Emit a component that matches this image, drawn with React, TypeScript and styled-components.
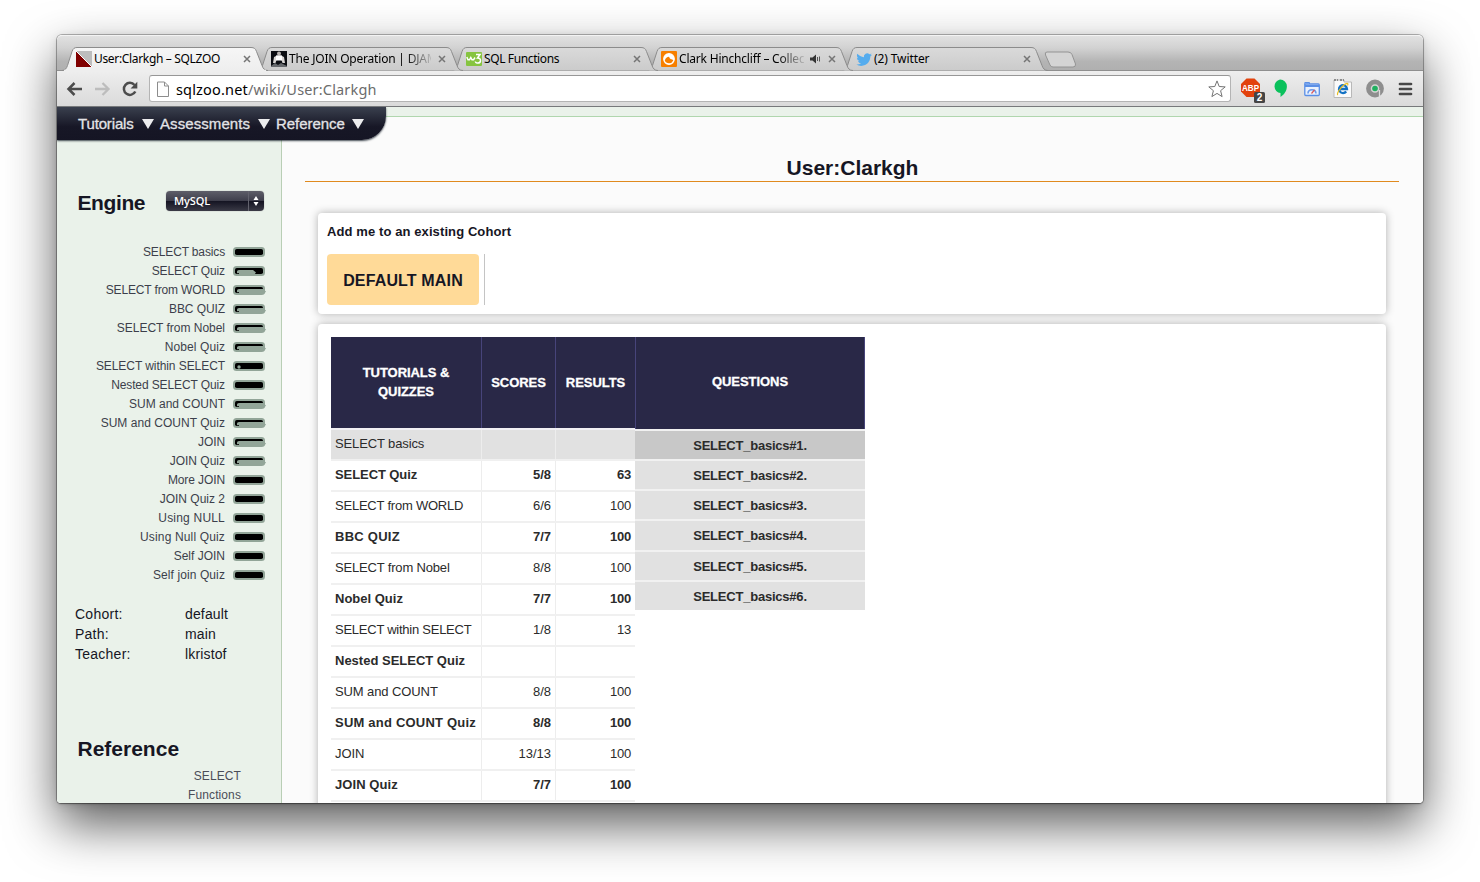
import React from "react";
import styled, { createGlobalStyle, css } from "styled-components";

const Global = createGlobalStyle`
  * { box-sizing: border-box; }
  html, body { margin: 0; padding: 0; background: #fff; }
  body { width: 1480px; height: 882px; overflow: hidden; font-family: "Liberation Sans", Helvetica, Arial, sans-serif; }
`;

const Desktop = styled.div`
  width: 1480px;
  height: 882px;
  padding: 35px 57px 79px;
  overflow: hidden;
`;

const Window = styled.div`
  width: 1366px;
  height: 768px;
  display: flex;
  flex-direction: column;
  border-radius: 5px 5px 4px 4px;
  box-shadow: 0 0 0 1px rgba(0, 0, 0, 0.26), 0 22px 50px rgba(0, 0, 0, 0.64), 0 2px 10px rgba(0, 0, 0, 0.12),
    0 1px 2px rgba(0, 0, 0, 0.3);
`;

const TabStrip = styled.div`
  flex: none;
  height: 36px;
  display: flex;
  align-items: flex-end;
  padding-left: 5px;
  border-radius: 5px 5px 0 0;
  border-top: 1px solid #f3f3f3;
  background: linear-gradient(#e1e1e1, #d2d2d2 35%, #b4b4b4 75%, #b0b0b0);
  border-bottom: 1px solid #8f8f8f;
`;

const TabBox = styled.div<{ $z: number }>`
  position: relative;
  z-index: ${(p) => p.$z};
  width: 195px;
  height: 23px;
  display: flex;
  align-items: center;
  padding: 1px 3px 0 14px;
`;

const TabShape = styled.svg`
  position: absolute;
  left: 0;
  top: 0;
  overflow: visible;
`;

const Favicon = styled.svg`
  position: relative;
  flex: none;
  width: 16px;
  height: 16px;
  margin-right: 2px;
`;

const TabTitle = styled.span<{ $ls: number; $fade?: boolean }>`
  position: relative;
  flex: 1;
  min-width: 0;
  white-space: nowrap;
  font: 12px/18px "Noto Sans", "Open Sans", sans-serif;
  letter-spacing: ${(p) => p.$ls}px;
  color: #000;
  ${(p) =>
    p.$fade &&
    css`
      mask-image: linear-gradient(90deg, #000 calc(100% - 26px), rgba(0, 0, 0, 0.12));
    `}
`;

const TabSide = styled.svg`
  position: relative;
  flex: none;
  margin-left: 2px;
`;

const Sound = styled(TabSide)`
  margin-left: 6px;
`;

const NewTab = styled.svg`
  margin: 0 0 2px 7px;
`;

const Toolbar = styled.div`
  flex: none;
  height: 36px;
  display: flex;
  align-items: center;
  padding: 0 11px 0 9px;
  background: linear-gradient(#eeeeee, #dadada);
  border-bottom: 1px solid #77797b;
`;

const NavIcon = styled.svg`
  flex: none;
  margin-right: 11px;
`;

const Address = styled.div`
  flex: 1;
  height: 27px;
  display: flex;
  align-items: center;
  padding: 0 4px 0 7px;
  background: #fff;
  border: 1px solid #b4b4b4;
  border-top-color: #979797;
  border-radius: 3px;
`;

const Url = styled.span`
  flex: 1;
  margin-left: 7px;
  font: 14.5px/20px "Noto Sans", "Open Sans", sans-serif;
  letter-spacing: 0.17px;
  color: #6c6c6c;
  b { font-weight: 400; color: #000; }
`;

const Extensions = styled.div`
  display: flex;
  align-items: center;
  gap: 9px;
  margin-left: 9px;
  svg { overflow: visible; }
`;

const Viewport = styled.div`
  position: relative;
  flex: 1;
  min-height: 0;
  overflow: hidden;
  display: flex;
  flex-direction: column;
  background: #fbfbfb;
  border-radius: 0 0 4px 4px;
`;

const TopBand = styled.div`
  flex: none;
  height: 10px;
  background: #eaf2ea;
  border-bottom: 1px solid #b0d6ae;
`;

const MenuBar = styled.nav`
  position: absolute;
  z-index: 2;
  left: 0;
  top: 0;
  width: 329px;
  height: 33px;
  display: flex;
  align-items: center;
  gap: 6.500px;
  padding: 0 0 0 21px;
  border-radius: 0 0 24px 0;
  background: linear-gradient(#3a404e, #171726 60%, #151524);
  box-shadow: 0 1px 2px rgba(20, 30, 40, 0.8);
`;

const MenuItem = styled.span<{ $w: number; $ls: number }>`
  width: ${(p) => p.$w}px;
  display: flex;
  justify-content: space-between;
  align-items: center;
  font-size: 15px;
  letter-spacing: ${(p) => p.$ls}px;
  color: #e3e3e6;
  -webkit-text-stroke: 0.3px #e3e3e6;
`;

const Columns = styled.div`
  flex: 1;
  min-height: 0;
  display: flex;
`;

const Sidebar = styled.aside`
  flex: none;
  width: 225px;
  height: 688px;
  margin-top: -1px;
  padding-top: 75px;
  overflow: hidden;
  background: #eaf2ea;
  border-right: 1px solid #b9ceb5;
`;

const SideHead = styled.div`
  height: 24px;
  display: flex;
  align-items: center;
  justify-content: space-between;
  padding: 0 17px 0 20.5px;
`;

const SideTitle = styled.h2<{ $ls?: number }>`
  margin: 0;
  font-size: 21px;
  line-height: 24px;
  letter-spacing: ${(p) => p.$ls ?? 0}px;
  color: #161624;
`;

const Select = styled.div`
  width: 98px;
  height: 20px;
  display: flex;
  align-items: center;
  justify-content: space-between;
  margin-top: -4px;
  padding-left: 8px;
  border-radius: 4px;
  background: linear-gradient(#5e5e69, #3f3f4c 48%, #151523 52%, #3a3a46);
  box-shadow: 0 0 1px #777;
  font: 600 11px/20px "Open Sans", "Noto Sans", sans-serif;
  letter-spacing: -0.1px;
  color: #fff;
`;

const Stepper = styled.span`
  width: 16px;
  height: 20px;
  display: flex;
  align-items: center;
  justify-content: center;
  padding-right: 2px;
  border-left: 1px solid #62626d;
`;

const Lessons = styled.ul`
  list-style: none;
  margin: 27px 0 0;
  padding: 0 15px 0 0;
`;

const Lesson = styled.li`
  height: 19px;
  display: flex;
  align-items: center;
  justify-content: flex-end;
  gap: 8px;
`;

const LessonName = styled.span<{ $ls: number }>`
  font-size: 12px;
  letter-spacing: ${(p) => p.$ls}px;
  color: #3c3f4b;
`;

const Facts = styled.dl`
  display: grid;
  grid-template-columns: 110px 1fr;
  margin: 20px 0 0 18px;
  font-size: 14px;
  line-height: 20px;
  letter-spacing: 0.15px;
  color: #161624;
  dt, dd { margin: 0; }
  dt { letter-spacing: 0.25px; }
`;

const RefHead = styled.div`
  margin-top: 73px;
  padding-left: 20.5px;
`;

const RefLinks = styled.div`
  margin-top: 6px;
  padding-right: 40px;
  text-align: right;
  font-size: 12px;
  line-height: 19px;
  letter-spacing: 0.1px;
  color: #4a4d58;
`;

const Main = styled.main`
  flex: 1;
  padding: 37px 24px 0 23px;
`;

const PageTitle = styled.h1`
  height: 28px;
  margin: 0 0 31px;
  padding-left: 1px;
  font-size: 21px;
  line-height: 28px;
  text-align: center;
  color: #161624;
  border-bottom: 1px solid #e08a1e;
`;

const Card = styled.section<{ $h: number; $pad: string }>`
  height: ${(p) => p.$h}px;
  margin: 0 13px 10px;
  padding: ${(p) => p.$pad};
  background: #fff;
  border-radius: 4px;
  box-shadow: 0 0 8px rgba(0, 0, 0, 0.3);
`;

const CardTitle = styled.p`
  margin: 0;
  font-size: 13px;
  line-height: 18px;
  font-weight: 700;
  letter-spacing: 0.1px;
  color: #161624;
`;

const CohortRow = styled.div`
  display: inline-flex;
  height: 51px;
  margin-top: 13px;
  padding-right: 5px;
  border-right: 1px solid #c4c4c4;
`;

const CohortButton = styled.button`
  width: 152px;
  height: 51px;
  padding: 3px 0 0;
  border: 0;
  border-radius: 4px;
  background: #ffda98;
  color: #161624;
  font: 700 16px "Liberation Sans", Helvetica, Arial, sans-serif;
  letter-spacing: 0.15px;
  white-space: nowrap;
`;

const Tables = styled.div`
  display: flex;
  align-items: flex-start;
`;

const Scores = styled.div`
  width: 304px;
`;

const cols = css`
  display: grid;
  grid-template-columns: 151px 74px 79px;
`;

const HeadRow = styled.div`
  ${cols}
  height: 93px;
  border-bottom: 2px solid #f1f0f3;
`;

const HeadCell = styled.div<{ $line?: boolean; $tall?: boolean }>`
  display: flex;
  align-items: center;
  justify-content: center;
  padding-bottom: ${(p) => (p.$tall ? 2 : 0)}px;
  text-align: center;
  background: #292847;
  color: #fff;
  font-size: 13px;
  line-height: 19px;
  font-weight: 700;
  letter-spacing: -0.05px;
  -webkit-text-stroke: 0.3px #fff;
  border-right: ${(p) => (p.$line ? "1px solid #47447a" : "0")};
`;

const Row = styled.div<{ $bold?: boolean; $shade?: boolean }>`
  ${cols}
  height: 31px;
  border-bottom: 2px solid #f0f0f0;
  background: ${(p) => (p.$shade ? "#e1e1e1" : "#fff")};
  font-size: 13px;
  line-height: 27px;
  font-weight: ${(p) => (p.$bold ? 700 : 400)};
  color: #2b2b2b;
`;

const Cell = styled.span<{ $num?: boolean; $last?: boolean; $ls?: number }>`
  padding: 0 4px;
  text-align: ${(p) => (p.$num ? "right" : "left")};
  letter-spacing: ${(p) => p.$ls ?? 0}px;
  white-space: nowrap;
  border-right: ${(p) => (p.$last ? "0" : "1px solid #ededed")};
`;

const Questions = styled.div`
  width: 230px;
`;

const QuestionsHead = styled(HeadCell)`
  height: 92px;
  padding-bottom: 4px;
  border-left: 1px solid #47447a;
`;

const Question = styled.div<{ $h: number; $active?: boolean }>`
  height: ${(p) => p.$h}px;
  border-top: 2px solid #f1f1f1;
  background: ${(p) => (p.$active ? "#c8c8c8" : "#e1e1e1")};
  text-align: center;
  font-size: 13px;
  line-height: 30px;
  font-weight: 700;
  letter-spacing: -0.22px;
  color: #2b2b2b;
`;

const TAB_PATH =
  "M0 23.5C3 23.5 4.500 21.500 5.500 18.500L10 4.500C11 1.500 12.500 .5 15 .5H189C192 .5 193.500 1.500 194.500 4.500L200 18.500C201 21.500 202.500 23.500 206 23.500";

const icons: Record<string, React.ReactNode> = {
  zoo: (
    <>
      <path d="M0 0H16V16Z" fill="#bdbdbd" />
      <path d="M0 0V16H16Z" fill="#800000" />
      <path d="M0 0L16 16" stroke="#fff" />
    </>
  ),
  join: (
    <>
      <rect width="16" height="16" fill="#0b0d12" />
      <circle cx="8" cy="2.500" r="2" fill="#b9b4b2" />
      <path d="M3 6L6 4.500H10L13 6L14 12H11.500L10.500 9H5.500L4.500 12H2Z" fill="#d9d6d4" />
      <rect x="5" y="4.500" width="6" height="5" fill="#fff" />
      <path d="M0 15L4 12L7 14L10 12L16 15V16H0Z" fill="#66696d" />
    </>
  ),
  w3: (
    <>
      <rect y="1" width="16" height="14" rx="1" fill="#86c440" />
      <path d="M.8 6L2 8.800H3.500L4.800 6.500L6 8.800H7.500L9 6.500" fill="none" stroke="#fff" strokeWidth="1.500" />
      <path d="M10 3.500H14L11.500 7Q14.800 7 14.500 10Q14 12.500 11 12Q9.500 11.700 9.300 10.500" fill="none" stroke="#fff" strokeWidth="1.500" />
    </>
  ),
  groove: (
    <>
      <rect width="16" height="16" rx="1" fill="#f77f00" />
      <circle cx="8" cy="8" r="5.200" fill="#fff" stroke="#fff" strokeWidth="1.400" />
      <path d="M3.800 9.500Q5 5.800 8 5.800Q9 8.500 10.200 8.200Q11.500 8.300 12.300 9.500Q11 12.300 8 12.300Q4.800 12.300 3.800 9.500Z" fill="#f77f00" />
    </>
  ),
  bird: (
    <path
      transform="translate(.3 .8) scale(.65)"
      fill="#55acee"
      d="M23.953 4.570a10 10 0 01-2.825.775 4.958 4.958 0 002.163-2.723c-.951.555-2.005.959-3.127 1.184a4.920 4.920 0 00-8.384 4.482C7.690 8.095 4.067 6.130 1.640 3.162a4.822 4.822 0 00-.666 2.475c0 1.710.870 3.213 2.188 4.096a4.904 4.904 0 01-2.228-.616v.060a4.923 4.923 0 003.946 4.827 4.996 4.996 0 01-2.212.085 4.936 4.936 0 004.604 3.417 9.867 9.867 0 01-6.102 2.105c-.390 0-.779-.023-1.170-.067a13.995 13.995 0 007.557 2.209c9.053 0 13.998-7.496 13.998-13.985 0-.210 0-.420-.015-.630A9.935 9.935 0 0024 4.590z"
    />
  ),
};

const tabs = [
  { icon: "zoo", title: "User:Clarkgh – SQLZOO", ls: -0.33, fade: false, sound: false },
  { icon: "join", title: "The JOIN Operation | DJAM", ls: -0.2, fade: true, sound: false },
  { icon: "w3", title: "SQL Functions", ls: -0.38, fade: false, sound: false },
  { icon: "groove", title: "Clark Hinchcliff – Collec", ls: -0.2, fade: true, sound: true },
  { icon: "bird", title: "(2) Twitter", ls: -0.1, fade: false, sound: false },
];

const lessons: [string, number, number][] = [
  ["SELECT basics", 0, -0.14],
  ["SELECT Quiz", 21, -0.1],
  ["SELECT from WORLD", 31, -0.15],
  ["BBC QUIZ", 31, -0.08],
  ["SELECT from Nobel", 31, -0.02],
  ["Nobel Quiz", 31, 0.08],
  ["SELECT within SELECT", 4, -0.07],
  ["Nested SELECT Quiz", 0, -0.11],
  ["SUM and COUNT", 31, 0],
  ["SUM and COUNT Quiz", 31, 0.03],
  ["JOIN", 31, -0.1],
  ["JOIN Quiz", 31, 0],
  ["More JOIN", 0, -0.1],
  ["JOIN Quiz 2", 0, 0],
  ["Using NULL", 0, 0.2],
  ["Using Null Quiz", 0, 0.15],
  ["Self JOIN", 0, 0],
  ["Self join Quiz", 0, 0.1],
];

const scores: [string, string, string, number][] = [
  ["SELECT basics", "", "", -0.12],
  ["SELECT Quiz", "5/8", "63", -0.08],
  ["SELECT from WORLD", "6/6", "100", -0.22],
  ["BBC QUIZ", "7/7", "100", 0.25],
  ["SELECT from Nobel", "8/8", "100", -0.17],
  ["Nobel Quiz", "7/7", "100", 0],
  ["SELECT within SELECT", "1/8", "13", -0.25],
  ["Nested SELECT Quiz", "", "", 0],
  ["SUM and COUNT", "8/8", "100", -0.1],
  ["SUM and COUNT Quiz", "8/8", "100", 0.21],
  ["JOIN", "13/13", "100", -0.1],
  ["JOIN Quiz", "7/7", "100", 0.08],
];

function Meter({ fill }: { fill: number }) {
  return (
    <svg width="33" height="11" viewBox="0 0 33 11">
      <rect x="0" y="1" width="32" height="10" rx="3.500" fill="#92a598" />
      <rect x="2" y="3" width="28" height="6" rx="1.800" fill="#000" />
      {fill > 4 && (
        <path d={`M4 6.500Q4 5 6 5H${fill - 1}L${fill + 2} 7.500L${fill} 10H6V8Q4.500 8.500 4 8Z`} fill="#92a598" />
      )}
      {fill === 4 && <circle cx="6" cy="7" r="1.700" fill="#92a598" />}
    </svg>
  );
}

function Tab({ tab, index }: { tab: (typeof tabs)[number]; index: number }) {
  const active = index === 0;
  return (
    <TabBox $z={10 - index}>
      <TabShape width="208" height="24">
        <defs>
          <linearGradient id={`tab${index}`} x1="0" y1="0" x2="0" y2="1">
            <stop offset="0" stopColor={active ? "#f6f6f6" : "#dadada"} />
            <stop offset="1" stopColor={active ? "#eeeeee" : "#cbcbcb"} />
          </linearGradient>
        </defs>
        <path d={TAB_PATH} fill={`url(#tab${index})`} stroke="#8c8c8c" />
        {active && <path d="M2 23.500H204" stroke="#eee" strokeWidth="1.500" />}
      </TabShape>
      <Favicon viewBox="0 0 16 16">{icons[tab.icon]}</Favicon>
      <TabTitle $ls={tab.ls} $fade={tab.fade}>
        {tab.title}
      </TabTitle>
      {tab.sound && (
        <Sound width="11" height="10" viewBox="0 0 11 10">
          <path d="M0 3.500H2.500L6 .5V9.500L2.500 6.500H0Z" fill="#333" />
          <path d="M7.500 3V7M9.500 2.500V7.500" stroke="#555" />
        </Sound>
      )}
      <TabSide width="16" height="10" viewBox="0 0 16 10">
        <path d="M6 2L12 8M12 2L6 8" stroke="#757575" strokeWidth="1.500" />
      </TabSide>
    </TabBox>
  );
}

export default function App() {
  return (
    <Desktop>
      <Global />
      <Window>
        <TabStrip>
          {tabs.map((t, i) => (
            <Tab key={t.title} tab={t} index={i} />
          ))}
          <NewTab width="34" height="17" viewBox="0 0 34 17">
            <path d="M3 1H24Q27 1 28 3.500L31.500 13Q32 16 29 16H9Q7 16 6 14L1.500 4Q.5 1 3 1Z" fill="#d4d4d4" stroke="#949494" />
          </NewTab>
        </TabStrip>
        <Toolbar>
          <NavIcon width="17" height="16" viewBox="0 0 17 16">
            <path d="M16 8H3M8.500 2L2.500 8L8.500 14" fill="none" stroke="#4c4c4c" strokeWidth="2.500" />
          </NavIcon>
          <NavIcon width="17" height="16" viewBox="0 0 17 16">
            <path d="M1 8H14M8.500 2L14.500 8L8.500 14" fill="none" stroke="#bdbdbd" strokeWidth="2.300" />
          </NavIcon>
          <NavIcon width="16" height="16" viewBox="0 0 16 16">
            <path d="M13.300 10.500A6 6 0 1 1 12.500 4" fill="none" stroke="#4c4c4c" strokeWidth="2.500" />
            <path d="M15.300 .8V7.500H8.600Z" fill="#4c4c4c" />
          </NavIcon>
          <Address>
            <svg width="12" height="16" viewBox="0 0 12 16">
              <path d="M.5 1H7.500L11.500 5V15.500H.5ZM7.500 1V5H11.500" fill="#fdfdfd" stroke="#8c8c8c" />
            </svg>
            <Url>
              <b>sqlzoo.net</b>/wiki/User:Clarkgh
            </Url>
            <svg width="18" height="18" viewBox="0 0 18 18">
              <path d="M9 .9L11.200 6.500L17.200 6.900L12.600 10.700L14.100 16.600L9 13.400L3.900 16.600L5.400 10.700L.8 6.900L6.800 6.500Z" fill="#fff" stroke="#737373" strokeLinejoin="round" />
            </svg>
          </Address>
          <Extensions>
            <svg width="24" height="25" viewBox="0 0 24 25">
              <path d="M6.500 2.500H14.500L20 8V15.500L14.500 21H6.500L1 15.500V8Z" fill="#e2420d" />
              <text x="2" y="15.300" fontFamily="Liberation Sans" fontWeight="700" fontSize="9.500" fill="#fff" textLength="17" lengthAdjust="spacingAndGlyphs">
                ABP
              </text>
              <rect x="14" y="16" width="11" height="11" rx="1.500" fill="#454545" />
              <text x="19.500" y="25" textAnchor="middle" fontFamily="Liberation Sans" fontWeight="700" fontSize="10" fill="#fff">
                2
              </text>
            </svg>
            <svg width="15" height="19" viewBox="0 0 15 19">
              <path d="M7 .5A6.800 6.800 0 0 1 13.900 7.300C13.900 12 11 16 7.500 18V14.100A6.900 6.900 0 0 1 7 .5Z" fill="#0bc15c" />
            </svg>
            <svg width="27" height="16" viewBox="0 0 27 16">
              <path d="M7.800 4V1.500H12.500V4" fill="#c9dbf8" stroke="#5a8fe6" />
              <rect x="7.800" y="3" width="14.500" height="11.500" rx="1" fill="#e9f1fd" stroke="#5a8fe6" strokeWidth="1.300" />
              <path d="M8 5H22" stroke="#5a8fe6" strokeWidth="2" />
              <path d="M11 12.500Q11 8.800 15 8.800Q18.800 8.800 19 12.500" fill="none" stroke="#6b9bea" strokeWidth="1.600" />
              <path d="M14.500 12.500L17.500 8.800" stroke="#d55" strokeWidth="1.200" />
            </svg>
            <svg width="19" height="19" viewBox="0 0 19 19">
              <path d="M1 4V1H11V3H18.500V18.500H1Z" fill="#fafafa" stroke="#b8b8b8" />
              <path d="M1 1H5M7 1H11" stroke="#444" strokeDasharray="2 1" />
              <path d="M13.200 12.500A4 4 0 1 1 14 10H7" fill="none" stroke="#1372c4" strokeWidth="2.300" />
              <path d="M5 16Q3.500 15.500 6 11.500Q10.500 5 14 4.300Q15.500 4.500 14.500 6.500" fill="none" stroke="#eabf22" strokeWidth="1.200" />
            </svg>
            <svg width="29" height="19" viewBox="0 0 29 19">
              <circle cx="14" cy="9.500" r="6.600" fill="#d5d5d5" stroke="#8e8e8e" strokeWidth="4.600" />
              <path d="M18.500 11V18" stroke="#dedede" strokeWidth="1.300" />
              <circle cx="14" cy="9.500" r="2.800" fill="#20b060" />
            </svg>
            <svg width="13" height="14" viewBox="0 0 13 14">
              <path d="M1 2H12M1 7H12M1 12H12" stroke="#474747" strokeWidth="2.700" strokeLinecap="round" />
            </svg>
          </Extensions>
        </Toolbar>
        <Viewport>
          <TopBand />
          <MenuBar>
            {(
              [
                ["Tutorials", 75.5, -0.15],
                ["Assessments", 109.5, 0.08],
                ["Reference", 87.5, -0.05],
              ] as [string, number, number][]
            ).map(([label, w, ls]) => (
              <MenuItem key={label} $w={w} $ls={ls}>
                {label}
                <svg width="12" height="10" viewBox="0 0 12 10">
                  <path d="M0 0H12L6 10Z" fill="#ececee" />
                </svg>
              </MenuItem>
            ))}
          </MenuBar>
          <Columns>
            <Sidebar>
              <SideHead>
                <SideTitle $ls={-0.4}>Engine</SideTitle>
                <Select>
                  MySQL
                  <Stepper>
                    <svg width="6" height="10" viewBox="0 0 6 10">
                      <path d="M3 0L5.500 4H.5ZM3 10L.5 6H5.500Z" fill="#fff" />
                    </svg>
                  </Stepper>
                </Select>
              </SideHead>
              <Lessons>
                {lessons.map(([name, fill, ls]) => (
                  <Lesson key={name}>
                    <LessonName $ls={ls}>{name}</LessonName>
                    <Meter fill={fill} />
                  </Lesson>
                ))}
              </Lessons>
              <Facts>
                <dt>Cohort:</dt>
                <dd>default</dd>
                <dt>Path:</dt>
                <dd>main</dd>
                <dt>Teacher:</dt>
                <dd>lkristof</dd>
              </Facts>
              <RefHead>
                <SideTitle>Reference</SideTitle>
              </RefHead>
              <RefLinks>
                <div>SELECT</div>
                <div>Functions</div>
              </RefLinks>
            </Sidebar>
            <Main>
              <PageTitle>User:Clarkgh</PageTitle>
              <Card $h={101} $pad="10px 9px 9px">
                <CardTitle>Add me to an existing Cohort</CardTitle>
                <CohortRow>
                  <CohortButton>DEFAULT MAIN</CohortButton>
                </CohortRow>
              </Card>
              <Card $h={520} $pad="13px">
                <Tables>
                  <Scores>
                    <HeadRow>
                      <HeadCell $line $tall>
                        TUTORIALS &amp;
                        <br />
                        QUIZZES
                      </HeadCell>
                      <HeadCell $line>SCORES</HeadCell>
                      <HeadCell>RESULTS</HeadCell>
                    </HeadRow>
                    {scores.map(([name, score, result, ls], i) => (
                      <Row key={name} $bold={i % 2 === 1} $shade={i === 0}>
                        <Cell $ls={ls}>{name}</Cell>
                        <Cell $num>{score}</Cell>
                        <Cell $num $last $ls={-0.2}>
                          {result}
                        </Cell>
                      </Row>
                    ))}
                  </Scores>
                  <Questions>
                    <QuestionsHead $line>QUESTIONS</QuestionsHead>
                    {[30, 30, 30, 31, 30, 30].map((h, i) => (
                      <Question key={i} $h={h} $active={i === 0}>
                        SELECT_basics#{i + 1}.
                      </Question>
                    ))}
                  </Questions>
                </Tables>
              </Card>
            </Main>
          </Columns>
        </Viewport>
      </Window>
    </Desktop>
  );
}
